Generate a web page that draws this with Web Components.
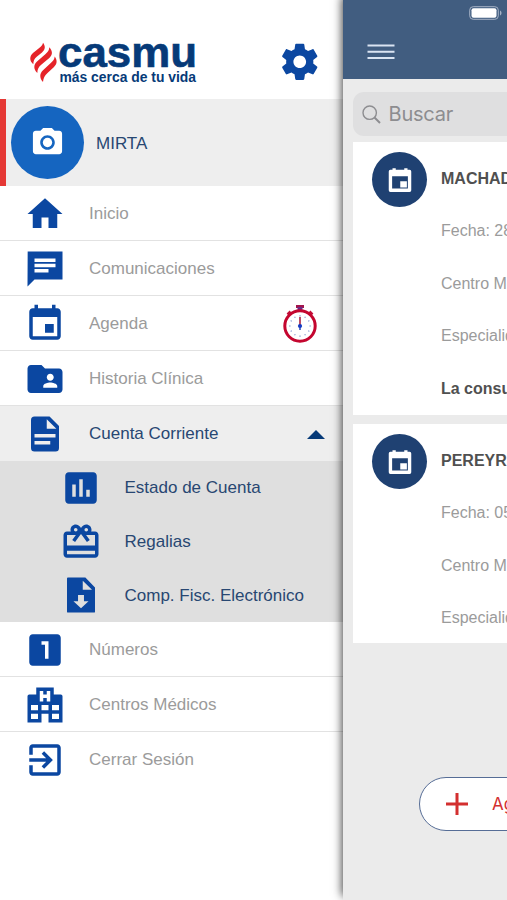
<!DOCTYPE html>
<html lang="es"><head><meta charset="utf-8"><title>casmu</title>
<style>
html,body{margin:0;height:100%;overflow:hidden}
body{font-family:"Liberation Sans",Arial,sans-serif;background:#fff}
</style></head><body>
<app-shell></app-shell>
<script>
const ICONS={
home:'<path d="M10 20v-6h4v6h5v-8h3L12 3 2 12h3v8z"/>',
chat:'<path d="M2.100 2H22v16H6l-4 4zM6 9v2h12V9zm8 5v-2H6v2zm4-6V6H6v2z" fill-rule="evenodd"/>',
event:'<path d="M17 12h-5v5h5v-5zM16 1v2H8V1H6v2H5c-1.110 0-1.990.9-1.990 2L3 19c0 1.100.89 2 2 2h14c1.100 0 2-.9 2-2V5c0-1.100-.9-2-2-2h-1V1h-2zm3 18H5V8h14v11z"/>',
date:'<path fill-rule="evenodd" d="M6 2.500h2.600v1.300h6.800V2.500H18v1.300h1.700a1.300 1.300 0 0 1 1.300 1.300v15.100a1.300 1.300 0 0 1-1.300 1.300H4.300A1.300 1.300 0 0 1 3 20.200V5.100a1.300 1.300 0 0 1 1.300-1.300H6zM5.700 9v9.800h12.600V9z"/><path d="M12.200 13h5.300v5h-5.300z"/>',
folder:'<path d="M20 6h-8l-2-2H4c-1.100 0-1.990.9-1.990 2L2 18c0 1.100.9 2 2 2h16c1.100 0 2-.9 2-2V8c0-1.100-.9-2-2-2zm-5 3c1.100 0 2 .9 2 2s-.9 2-2 2-2-.9-2-2 .9-2 2-2zm4 8h-8v-1c0-1.330 2.670-2 4-2s4 .67 4 2v1z"/>',
doc:'<path fill-rule="evenodd" d="M6 2h8.600L20 7.400V20a2 2 0 0 1-2 2H6a2 2 0 0 1-2-2V4a2 2 0 0 1 2-2zm7 1.500V9h5.500zM6 12v2h12v-2zm0 4v2h9v-2z"/>',
chart:'<path d="M19 3H5c-1.100 0-2 .9-2 2v14c0 1.100.9 2 2 2h14c1.100 0 2-.9 2-2V5c0-1.100-.9-2-2-2zM9 17H7v-7h2v7zm4 0h-2V7h2v10zm4 0h-2v-4h2v4z"/>',
gift:'<path d="M20 6h-2.180c.11-.31.180-.65.180-1 0-1.660-1.340-3-3-3-1.050 0-1.960.54-2.500 1.350l-.5.67-.5-.68C10.960 2.540 10.050 2 9 2 7.340 2 6 3.340 6 5c0 .35.070.69.180 1H4c-1.110 0-1.990.89-1.990 2L2 19c0 1.110.89 2 2 2h16c1.110 0 2-.89 2-2V8c0-1.110-.89-2-2-2zm-5-2c.55 0 1 .45 1 1s-.45 1-1 1-1-.45-1-1 .45-1 1-1zM9 4c.55 0 1 .45 1 1s-.45 1-1 1-1-.45-1-1 .45-1 1-1zm11 15H4v-2h16v2zm0-5H4V8h5.080L7 10.830 8.620 12 11 8.760l1-1.360 1 1.360L15.380 12 17 10.830 14.920 8H20v6z"/>',
download:'<path fill-rule="evenodd" d="M4.500 2H14.500L20 7.700V21.500a.5.5 0 0 1-.5.5H4.500a.5.5 0 0 1-.5-.5V2.500a.5.5 0 0 1 .5-.5zM14.300 4V9.500h5zM12 13v3.500H9.300l4.200 4 4.200-4H15V13z" transform="translate(0 0)"/>',
one:'<path d="M19 3H5c-1.100 0-2 .9-2 2v14c0 1.100.9 2 2 2h14c1.100 0 2-.9 2-2V5c0-1.100-.9-2-2-2zm-5 14h-2V9h-2V7h4v10z" stroke="none"/>',
hospital:'<path fill-rule="evenodd" d="M2 22V7a1 1 0 0 1 1-1h4V2h10v4h4a1 1 0 0 1 1 1v15h-8v-5h-4v5zM9 4v6h2V8h2v2h2V4h-2v2h-2V4zM4 20h4v-3H4zm12 0h4v-3h-4zM4 15h4v-3H4zm6 0h4v-3h-4zm6 0h4v-3h-4z"/>',
exit:'<path d="M10.090 15.590L11.500 17l5-5-5-5-1.410 1.410L12.670 11H3v2h9.670l-2.580 2.590zM19 3H5c-1.110 0-2 .9-2 2v4h2V5h14v14H5v-4H3v4c0 1.100.89 2 2 2h14c1.100 0 2-.9 2-2V5c0-1.100-.9-2-2-2z"/>',
camera:'<circle cx="12" cy="12" r="3.200"/><path d="M9 2L7.170 4H4c-1.100 0-2 .9-2 2v12c0 1.100.9 2 2 2h16c1.100 0 2-.9 2-2V6c0-1.100-.9-2-2-2h-3.170L15 2H9zm3 15c-2.760 0-5-2.240-5-5s2.240-5 5-5 5 2.240 5 5-2.240 5-5 5z"/>',
gear:'<path d="M19.430 12.980c.04-.32.070-.64.070-.98s-.03-.66-.07-.98l2.110-1.650c.19-.15.240-.42.120-.64l-2-3.460c-.12-.22-.39-.3-.61-.22l-2.490 1c-.52-.4-1.080-.73-1.690-.98l-.38-2.650C14.460 2.180 14.250 2 14 2h-4c-.25 0-.46.180-.49.420l-.38 2.650c-.61.250-1.170.590-1.690.980l-2.490-1c-.23-.09-.49 0-.61.220l-2 3.460c-.13.220-.07.490.12.640l2.110 1.650c-.04.320-.07.650-.07.980s.03.660.070.980l-2.110 1.650c-.19.150-.24.420-.12.640l2 3.460c.12.220.39.300.61.220l2.490-1c.52.400 1.080.730 1.690.980l.38 2.650c.03.240.24.420.49.420h4c.25 0 .46-.18.490-.42l.38-2.650c.61-.25 1.170-.59 1.690-.98l2.490 1c.23.090.49 0 .61-.22l2-3.460c.12-.22.070-.49-.12-.64l-2.110-1.650zM12 15.500c-1.930 0-3.500-1.570-3.500-3.500s1.570-3.500 3.500-3.500 3.500 1.570 3.500 3.500-1.570 3.500-3.500 3.500z"/>'
};
ICONS.download='<path fill-rule="evenodd" d="M4.500 2H14.500L20 7.700V21.500a.5.5 0 0 1-.5.5H4.500a.5.5 0 0 1-.5-.5V2.500a.5.5 0 0 1 .5-.5zM13 3.800V9h5.300zM10.300 12v3.500H7.700l4.300 4 4.300-4h-2.600V12z"/>';
const define=(name,render)=>customElements.define(name,class extends HTMLElement{
  constructor(){super();this.attachShadow({mode:'open'});}
  connectedCallback(){this.shadowRoot.innerHTML=render(this);}
});
define('ui-icon',e=>`<style>:host{display:block;flex:none;width:42px;height:42px}svg{display:block;width:100%;height:100%}</style><svg viewBox="0 0 24 24" fill="currentColor">${ICONS[e.getAttribute('name')]}</svg>`);

define('brand-logo',()=>`<style>:host{display:block;width:172px;height:52px}svg{display:block}</style>
<svg width="172" height="52" viewBox="28 36 172 52" font-family="Liberation Sans" font-weight="700" fill="#063a78">
<g fill="#e52329"><path d="M43 42.800C45.800 46.500 45.300 49.500 42 52.500L37 56.500C34 59 33.500 61 33.300 64.300C29.200 60.500 29.500 56.300 33 53L39.500 47.800C41.700 46 42.800 44.800 43 42.800Z"/>
<path d="M49.300 47.300C53 51.500 52.700 55 49.300 58L41.500 64.500C38.500 67 37.500 69 37.300 73C33.300 69 33.500 64.500 37 61.500L45.300 54.300C48 52 49.200 50 49.300 47.300Z"/>
<path d="M54.700 56.500C57.700 60.500 57 64 54 67L47.500 73C44.500 75.700 43.500 78 43 82C39.300 77.800 39.500 73.500 43 70.200L50.500 63.300C53.300 60.800 54.500 59 54.700 56.500Z"/></g>
<text x="58" y="66.500" font-size="42.500" textLength="139" lengthAdjust="spacingAndGlyphs" stroke="#063a78" stroke-width=".6">casmu</text>
<text x="59.500" y="81.500" font-size="13.800" textLength="136.500" lengthAdjust="spacingAndGlyphs">más cerca de tu vida</text></svg>`);

define('stop-watch',()=>{let t='';for(let i=0;i<12;i++)t+=`<path d="M18 11.200v1.300" transform="rotate(${i*30} 18 22)"/>`;
return `<style>:host{display:block;width:36px;height:40px}svg{display:block}</style><svg width="36" height="40" viewBox="0 0 36 40" fill="none">
<path d="M7 9.500l3 3M29 9.500l-3 3" stroke="#c3103a" stroke-width="2.500"/><path d="M5.500 10.500l3-3M30.500 10.500l-3-3" stroke="#c3103a" stroke-width="2.500"/>
<path d="M14 2.500h8" stroke="#a3154c" stroke-width="3"/><path d="M18 3v4" stroke="#6b2a88" stroke-width="5"/>
<circle cx="18" cy="22" r="15.200" stroke="#c4062f" stroke-width="3" fill="#fff"/><g stroke="#7088c8" stroke-width="1">${t}</g>
<path d="M18 13v8" stroke="#b53a55" stroke-width="1.800"/><path d="M18 22v4" stroke="#2446b8" stroke-width="1.500"/><circle cx="18" cy="22" r="2.100" fill="#173dc4"/></svg>`});

define('menu-item',e=>`<style>
:host{display:flex;box-sizing:border-box;height:55px;align-items:center;padding:1px 25px 0 24px;border-bottom:1px solid #e2e2e2;color:#9b9b9b;font-size:17px;line-height:20px}
:host([active]){background:#eee;color:#284772;border-color:#eee}
:host([last]){border-color:transparent}
:host([sub]){height:auto;flex:1;border:0;padding:0 25px 0 59.500px;color:#284772}
ui-icon{color:#0b47a1;margin-right:23px}
.l{flex:1;white-space:nowrap;padding-top:1px}</style>
<ui-icon name="${e.getAttribute('icon')}"></ui-icon><span class="l"><slot></slot></span><slot name="end"></slot>`);

define('profile-row',()=>`<style>
:host{display:flex;box-sizing:border-box;height:87.500px;align-items:center;background:#eee;border-left:6px solid #e53835;padding-left:5px;color:#284772;font-size:17px}
.a{display:grid;place-items:center;width:73px;height:73px;border-radius:50%;background:#1565c0;color:#fff;margin-right:12px}
ui-icon{width:35px;height:35px}
.n{padding-top:3px}</style>
<div class="a"><ui-icon name="camera"></ui-icon></div><span class="n"><slot></slot></span>`);

define('side-menu',()=>`<style>
:host{display:flex;flex-direction:column;background:#fff}
header{display:flex;box-sizing:border-box;height:98.500px;padding:36px 21.500px 0 28px;justify-content:space-between}
header ui-icon{width:43.500px;height:43.500px;color:#0b47a1;margin-top:4px}
.sub{display:flex;flex-direction:column;box-sizing:border-box;height:161px;background:#dfdfdf}
.up{width:0;height:0;border:9px solid transparent;border-top:0;border-bottom:9px solid #063a78;margin:2px -7px 0 0}
</style>
<header><brand-logo></brand-logo><ui-icon name="gear"></ui-icon></header>
<profile-row>MIRTA</profile-row>
<menu-item icon="home">Inicio</menu-item>
<menu-item icon="chat">Comunicaciones</menu-item>
<menu-item icon="event">Agenda<stop-watch slot="end"></stop-watch></menu-item>
<menu-item icon="folder">Historia Clínica</menu-item>
<menu-item icon="doc" active>Cuenta Corriente<span slot="end" class="up"></span></menu-item>
<div class="sub"><menu-item sub icon="chart">Estado de Cuenta</menu-item>
<menu-item sub icon="gift">Regalias</menu-item>
<menu-item sub icon="download">Comp. Fisc. Electrónico</menu-item></div>
<menu-item icon="one">Números</menu-item>
<menu-item icon="hospital">Centros Médicos</menu-item>
<menu-item icon="exit" last>Cerrar Sesión</menu-item>`);

define('appointment-card',()=>`<style>
:host{display:flex;box-sizing:border-box;background:#fff;padding:10px 0 0 19px;margin-bottom:9px;color:#9b9b9b;font-size:16px}
.c{flex:none;display:grid;place-items:center;width:55px;height:55px;border-radius:50%;background:#1f4172;color:#fff;margin-right:14px}
ui-icon{width:30px;height:30px}
.t{display:flex;flex-direction:column}
::slotted(*){height:52.400px;line-height:53px;white-space:nowrap}
::slotted(b){color:#505050}</style>
<div class="c"><ui-icon name="date"></ui-icon></div><div class="t"><slot></slot></div>`);

define('pill-button',()=>`<style>
:host{display:flex;box-sizing:border-box;width:170px;height:54px;border:1.500px solid #566d96;border-radius:27px;background:#fff;align-items:center;padding-left:26px;color:#d32f2f;font:17px Inter,"Liberation Sans",sans-serif}
svg{flex:none;margin-right:24px}</style><svg width="22" height="22" viewBox="0 0 22 22"><path d="M11 0v22M0 11h22" stroke="#d32f2f" stroke-width="3"/></svg><slot></slot>`);

define('main-panel',()=>`<style>
:host{display:flex;flex-direction:column;background:#ebebeb;box-shadow:-1px -4px 9px rgba(0,0,0,.75);overflow:hidden}
header{display:flex;flex:none;flex-direction:column;box-sizing:border-box;height:79px;background:#415d80;padding:6px 0 0 24px}
.bat{align-self:flex-start;margin-left:102px}
.menu{margin-top:24px}
.search{display:flex;flex:none;box-sizing:border-box;height:44px;align-items:center;margin:13px 0 6px 10px;padding-left:9px;gap:7.500px;background:#dfdfe0;border-radius:11px 0 0 11px;color:#8d8d90;font:20px Inter,"Liberation Sans",sans-serif;letter-spacing:-.2px}
appointment-card{flex:none;margin-left:10px}
.one{height:273px}.two{height:219px}
pill-button{flex:none;margin:124.500px 0 0 76px}</style>
<header><svg class="bat" width="34" height="14" viewBox="0 0 34 14"><rect x=".7" y=".7" width="28.600" height="12.600" rx="3.500" fill="none" stroke="#a5b2c5"/><rect x="2.500" y="2.300" width="25" height="9.400" rx="2" fill="#fff"/><path d="M31 4.500c2 .8 2 4.200 0 5z" fill="#a5b2c5"/></svg>
<svg class="menu" width="28" height="16" viewBox="0 0 28 16"><path d="M.5 1.500h27M.5 7.800h27M.5 14h27" stroke="#dae4f2" stroke-width="1.900"/></svg></header>
<div class="search"><svg width="19" height="19" viewBox="0 0 19 19" fill="none" stroke="#8d8d90"><circle cx="7.700" cy="7.700" r="6.700" stroke-width="1.400"/><path d="M12.500 12.500l5.500 5.500" stroke-width="2"/></svg><span>Buscar</span></div>
<appointment-card class="one"><b>MACHAD</b><span>Fecha: 28</span><span>Centro Mé</span><span>Especialid</span><b>La consu</b></appointment-card>
<appointment-card class="two"><b>PEREYR</b><span>Fecha: 05</span><span>Centro Mé</span><span>Especialid</span></appointment-card>
<pill-button>Ag</pill-button>`);

define('app-shell',()=>`<style>:host{display:grid;grid-template-columns:343px 164px;width:507px;height:900px;overflow:hidden}
main-panel{z-index:1;min-width:0}</style><side-menu></side-menu><main-panel></main-panel>`);
</script></body></html>
